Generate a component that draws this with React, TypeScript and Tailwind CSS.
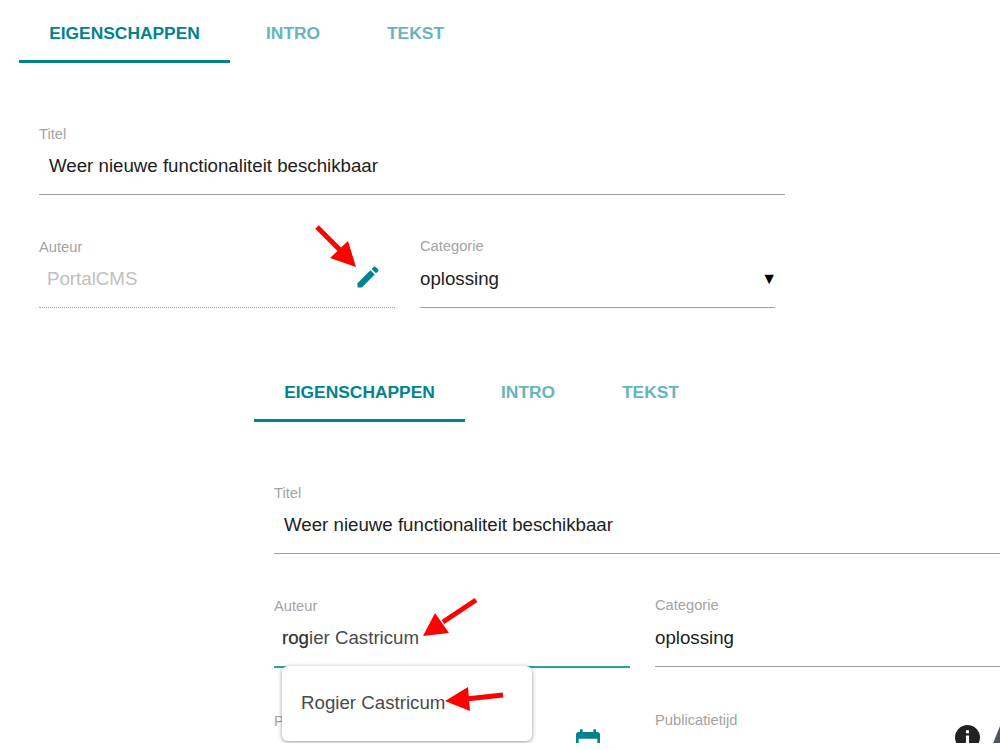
const TEAL = "#00838f";

function Tabs() {
  return (
    <div className="flex h-[63px] font-['Liberation_Sans',Arial,sans-serif] text-[17.4px] font-bold">
      <div className="flex w-[211px] items-start justify-center border-b-[3px] border-[#00838f] pt-[20px] text-[#00838f]">EIGENSCHAPPEN</div>
      <div className="w-[123px] pt-[20px] pl-[36px] text-[#66b5bc]">INTRO</div>
      <div className="pt-[20px] pl-[34px] text-[#66b5bc]">TEKST</div>
    </div>
  );
}

function Label({ children, className = "" }: { children: React.ReactNode; className?: string }) {
  return <div className={`text-[14.7px] leading-[16px] text-[#a3a3a3] ${className}`}>{children}</div>;
}

function Arrow({ d, className }: { d: { x1: number; y1: number; x2: number; y2: number; pts: string }; className: string }) {
  return (
    <svg className={`absolute ${className}`} width="1000" height="750" viewBox="0 0 1000 750">
      <line x1={d.x1} y1={d.y1} x2={d.x2} y2={d.y2} stroke="#ff0000" strokeWidth="5" />
      <polygon points={d.pts} fill="#ff0000" />
    </svg>
  );
}

export default function App() {
  return (
    <div className="h-[750px] w-[1000px] bg-white font-['Liberation_Sans',Arial,sans-serif]">
      <div className="relative h-[743px] w-[1000px] overflow-hidden">
        <div className="ml-[19px] w-[981px]">
          <Tabs />
          <div className="ml-[20px] w-[746px] pt-[63px]">
            <Label>Titel</Label>
            <div className="h-[53px] border-b border-[#9e9e9e] pl-[10px] pt-[13px] text-[18.7px] leading-[21px] text-[#212121]">Weer nieuwe functionaliteit beschikbaar</div>
          </div>
          <div className="ml-[20px] flex pt-[44px]">
            <div className="relative h-[69px] w-[356px] border-b border-dotted border-[#a3a3a3]">
              <Label>Auteur</Label>
              <div className="pl-[8px] pt-[13px] text-[18.7px] leading-[21px] text-[#c0c0c0]">PortalCMS</div>
              <svg className="absolute left-[315px] top-[24px]" width="28" height="28" viewBox="0 0 24 24" fill={TEAL}>
                <path d="M3 17.25V21h3.75L17.81 9.94l-3.75-3.75L3 17.25z" />
                <path d="M20.71 7.04a1 1 0 0 0 0-1.41l-2.34-2.34a1 1 0 0 0-1.41 0l-1.83 1.83 3.75 3.75 1.83-1.83z" />
              </svg>
            </div>
            <div className="relative ml-[25px] h-[69px] w-[355px] border-b border-[#9e9e9e]">
              <Label className="-mt-px">Categorie</Label>
              <div className="pt-[14px] text-[18.7px] leading-[21px] text-[#212121]">oplossing</div>
              <span className="absolute right-[-2px] top-[31px] text-[16px] leading-[18px] text-black">▼</span>
            </div>
          </div>

          <div className="ml-[235px] w-[800px] pt-[51px]">
            <Tabs />
            <div className="ml-[20px] pt-[63px]">
              <Label>Titel</Label>
              <div className="h-[53px] border-b border-[#9e9e9e] pl-[10px] pt-[13px] text-[18.7px] leading-[21px] text-[#212121]">Weer nieuwe functionaliteit beschikbaar</div>
            </div>
            <div className="ml-[20px] flex pt-[44px]">
              <div className="relative h-[70px] w-[356px] border-b-2 border-[#26a69a]">
                <Label>Auteur</Label>
                <div className="pl-[8px] pt-[13px] text-[18.7px] leading-[21px] text-[#4a4a4a]">
                  <span className="text-[#333] [-webkit-text-stroke:0.25px_#333]">rog</span>ier Castricum
                </div>
              </div>
              <div className="relative ml-[25px] h-[69px] w-[355px] border-b border-[#9e9e9e]">
                <Label className="-mt-px">Categorie</Label>
                <div className="pt-[14px] text-[18.7px] leading-[21px] text-[#212121]">oplossing</div>
              </div>
            </div>
            <div className="ml-[20px] flex pt-[45px]">
              <div className="relative w-[356px]">
                <Label>Publicatiedatum</Label>
                <svg className="absolute left-[298px] top-[15px]" width="32" height="32" viewBox="0 0 24 24" fill={TEAL}>
                  <path d="M19 3h-1V1h-2v2H8V1H6v2H5a2 2 0 0 0-2 2v14a2 2 0 0 0 2 2h14a2 2 0 0 0 2-2V5a2 2 0 0 0-2-2zm0 16H5V8h14v11z" />
                </svg>
              </div>
              <div className="ml-[25px]">
                <Label className="-mt-px">Publicatietijd</Label>
              </div>
            </div>
          </div>
        </div>

        <div className="absolute left-[282px] top-[666px] flex h-[75px] w-[250px] items-center rounded-[6px] bg-white pl-[19px] text-[18.7px] text-[#4a4a4a] shadow-[0_1px_4px_rgba(0,0,0,0.4)]">Rogier Castricum</div>

        <svg className="absolute left-[955px] top-[725px]" width="25" height="25" viewBox="0 0 24 24" fill="#212121">
          <path d="M12 0a12 12 0 1 0 0 24 12 12 0 0 0 0-24zm-1.5 5h3v3h-3V5zm0 5h3v9h-3v-9z" />
        </svg>
        <svg className="absolute left-[992px] top-[726px]" width="12" height="20" viewBox="0 0 12 20" fill="#4b5563">
          <polygon points="0,20 8,0 12,0 12,20" />
        </svg>

        <Arrow className="left-0 top-0" d={{ x1: 317, y1: 227, x2: 342, y2: 252, pts: "348,241 356,267 330,258" }} />
        <Arrow className="left-0 top-0" d={{ x1: 476, y1: 600, x2: 443, y2: 622, pts: "435,613 423,636 449,633" }} />
        <Arrow className="left-0 top-0" d={{ x1: 503, y1: 695, x2: 466, y2: 699, pts: "468,687 445,701 470,711" }} />
      </div>
    </div>
  );
}
